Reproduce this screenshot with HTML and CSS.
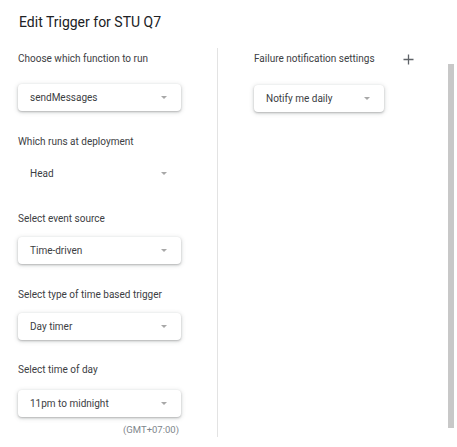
FILE: index.html
```html
<!DOCTYPE html>
<html lang="en">
<head>
<meta charset="utf-8">
<title>Edit Trigger</title>
<link rel="stylesheet" href="styles.css">
</head>
<body>
<div class="page">
  <h1 class="title">Edit Trigger for STU Q7</h1>
  <div class="cols">
    <div class="left">
      <div class="label l1">Choose which function to run</div>
      <div class="select raised s1"><span class="value">sendMessages</span><span class="arrow"></span></div>

      <div class="label l2">Which runs at deployment</div>
      <div class="select flat s2"><span class="value">Head</span><span class="arrow"></span></div>

      <div class="label l3">Select event source</div>
      <div class="select raised s3"><span class="value">Time-driven</span><span class="arrow"></span></div>

      <div class="label l4">Select type of time based trigger</div>
      <div class="select raised s4"><span class="value">Day timer</span><span class="arrow"></span></div>

      <div class="label l5">Select time of day</div>
      <div class="select raised s5"><span class="value">11pm to midnight</span><span class="arrow"></span></div>
      <div class="tz">(GMT+07:00)</div>
    </div>
    <div class="right">
      <div class="right-head">
        <span class="label">Failure notification settings</span>
        <svg class="plus" width="11" height="11" viewBox="0 0 11 11"><path d="M5.5 0.5v10M0.5 5.5h10" stroke="#5f6368" stroke-width="1.3" fill="none"/></svg>
      </div>
      <div class="select raised notify"><span class="value">Notify me daily</span><span class="arrow"></span></div>
    </div>
    <div class="scrollbar"></div>
  </div>
</div>
</body>
</html>
```

FILE: styles.css
```css
html, body {
  margin: 0;
  padding: 0;
  background: #ffffff;
  overflow: hidden;
}
body {
  font-family: Roboto, "Liberation Sans", sans-serif;
  color: #202124;
  width: 457px;
  height: 447px;
}
.title {
  margin: 0;
  padding: 13px 0 0 19px;
  height: 48px;
  box-sizing: border-box;
  font-size: 14px;
  font-weight: 400;
  line-height: 18px;
  color: #202124;
}
.cols {
  display: flex;
  align-items: flex-start;
}
.left {
  width: 218px;
  box-sizing: border-box;
  border-right: 1px solid #e3e3e3;
  padding: 0 0 0 18px;
  display: flex;
  flex-direction: column;
  align-items: flex-start;
}
.label {
  font-size: 10px;
  line-height: 14px;
  color: #3c4043;
  white-space: nowrap;
}
.select {
  width: 163px;
  height: 27px;
  box-sizing: border-box;
  border-radius: 4px;
  display: flex;
  align-items: center;
  justify-content: space-between;
  padding: 0 14px 0 12px;
  font-size: 10px;
  color: #3c4043;
  background: #fff;
}
.raised {
  box-shadow: 0 1px 2px 0 rgba(60, 64, 67, 0.3), 0 1px 4px 1px rgba(60, 64, 67, 0.15);
}
.arrow {
  width: 0;
  height: 0;
  border-left: 3.5px solid transparent;
  border-right: 3.5px solid transparent;
  border-top: 3.5px solid #a8a8a8;
}
.l1 { margin-top: 4px; }
.s1 { margin-top: 18px; }
.l2 { margin-top: 24px; }
.s2 { margin-top: 11px; }
.l3 { margin-top: 25px; }
.s3 { margin-top: 11px; }
.l4 { margin-top: 24px; }
.s4 { margin-top: 11px; }
.l5 { margin-top: 23px; }
.s5 { margin-top: 13px; }
.tz {
  align-self: stretch;
  margin: 6px 38px 0 0;
  font-size: 9.5px;
  line-height: 14px;
  color: #80868b;
  text-align: right;
}
.right {
  flex: 1;
  padding: 4px 0 0 36px;
}
.right-head {
  display: flex;
  align-items: center;
  height: 14px;
  width: 160px;
  justify-content: space-between;
}
.plus {
  display: block;
}
.notify {
  width: 130px;
  margin-top: 19px;
  padding-right: 14px;
}
.scrollbar {
  width: 6px;
  height: 364px;
  margin: 16px 3px 0 0;
  background: #c8c8c8;
}
```
